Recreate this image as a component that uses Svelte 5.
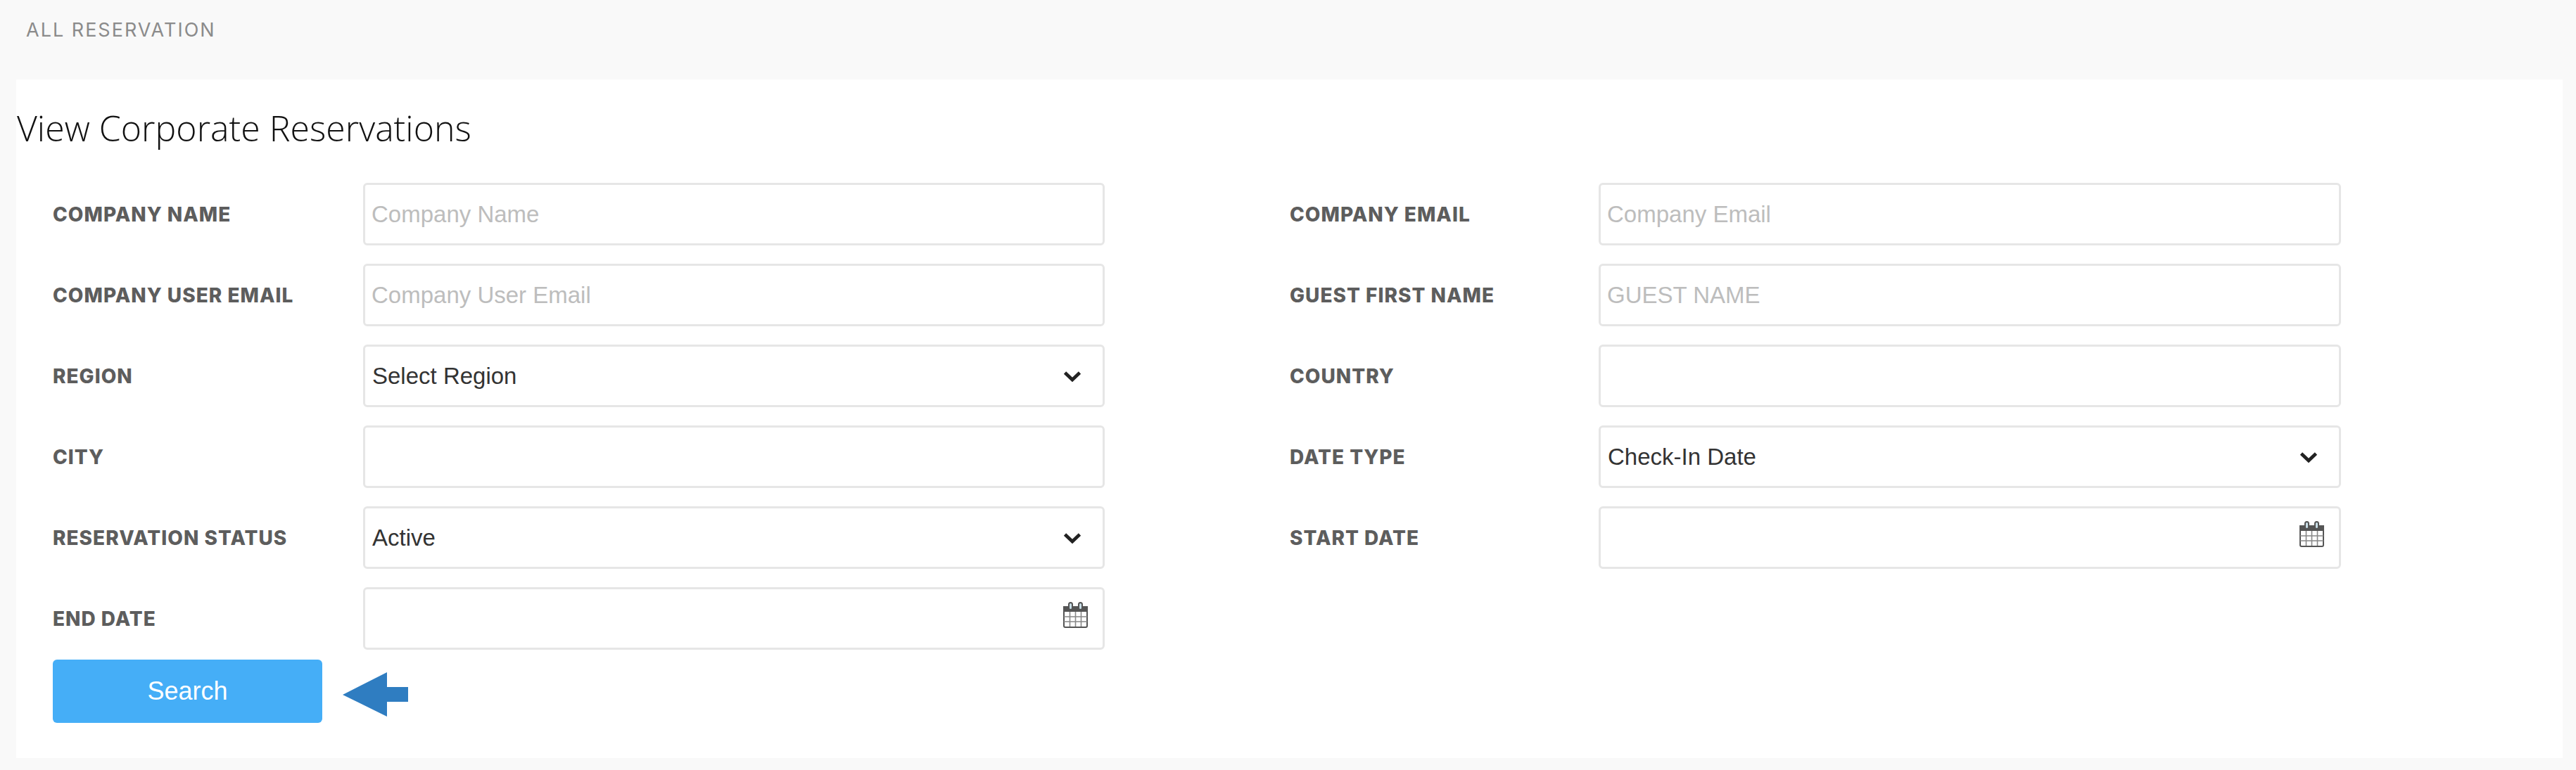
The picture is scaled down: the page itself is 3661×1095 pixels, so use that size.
<script>
  const fields = [
    { label: "COMPANY NAME", type: "text", placeholder: "Company Name" },
    { label: "COMPANY EMAIL", type: "text", placeholder: "Company Email" },
    { label: "COMPANY USER EMAIL", type: "text", placeholder: "Company User Email" },
    { label: "GUEST FIRST NAME", type: "text", placeholder: "GUEST NAME" },
    { label: "REGION", type: "select", value: "Select Region" },
    { label: "COUNTRY", type: "text", placeholder: "" },
    { label: "CITY", type: "text", placeholder: "" },
    { label: "DATE TYPE", type: "select", value: "Check-In Date" },
    { label: "RESERVATION STATUS", type: "select", value: "Active" },
    { label: "START DATE", type: "date" },
    { label: "END DATE", type: "date" },
  ];
</script>

<div class="page">
  <div class="crumb">ALL RESERVATION</div>
  <div class="card">
    <h1>View Corporate Reservations</h1>
    <div class="form">
      {#each fields as f}
        <div class="field">
          <span class="label">{f.label}</span>
          <div class="control">
            {#if f.type === "select"}
              <select><option>{f.value}</option></select>
              <svg class="chevron" viewBox="0 0 26 16" width="26" height="16">
                <path d="M2.5 3 13 13 23.5 3" fill="none" stroke="#222" stroke-width="4.8" />
              </svg>
            {:else}
              <input type="text" placeholder={f.placeholder} />
              {#if f.type === "date"}
                <svg class="calendar" viewBox="0 0 35 37" width="35" height="37">
                  <path d="M1 7h33v27a2 2 0 0 1-2 2H3a2 2 0 0 1-2-2z" fill="#fff" stroke="#555" stroke-width="2" />
                  <rect x="1" y="6" width="33" height="8" fill="#555" />
                  <rect x="8" y="1" width="5" height="10" rx="2.5" fill="#c8dde6" stroke="#555" stroke-width="2" />
                  <rect x="22" y="1" width="5" height="10" rx="2.5" fill="#c8dde6" stroke="#555" stroke-width="2" />
                  <path d="M9.5 14v21M17.5 14v21M25.5 14v21M1 21h33M1 28h33" stroke="#888" stroke-width="1.6" />
                </svg>
              {/if}
            {/if}
          </div>
        </div>
      {/each}
    </div>
    <div class="actions">
      <button>Search</button>
      <svg class="arrow" viewBox="0 0 93 63" width="93" height="63">
        <path d="M0 32 63 0v21h30v21H63v21z" fill="#2f7dc1" />
      </svg>
    </div>
  </div>
</div>

<style>
  :global(body) {
    margin: 0;
    background: #f9f9f9;
  }
  .page {
    width: 3661px;
    height: 1095px;
    box-sizing: border-box;
    padding: 0 19px 17px 23px;
    display: flex;
    flex-direction: column;
    font-family: "Liberation Sans", Arial, sans-serif;
  }
  .crumb {
    height: 113px;
    box-sizing: border-box;
    padding: 28px 0 0 14px;
    font-family: Inter, sans-serif;
    font-size: 27px;
    letter-spacing: 2px;
    line-height: 30px;
    color: #8b8b8b;
  }
  .card {
    flex: 1;
    background: #fff;
  }
  h1 {
    margin: 0;
    height: 147px;
    box-sizing: border-box;
    padding: 34px 0 0 1px;
    font-family: "Open Sans", sans-serif;
    font-weight: 300;
    font-size: 50px;
    line-height: 70px;
    color: #111;
  }
  .form {
    display: grid;
    grid-template-columns: 1758px 1494px;
    row-gap: 26px;
    padding-left: 52px;
  }
  .field {
    display: grid;
    grid-template-columns: 441px 1054px;
    align-items: center;
    height: 89px;
  }
  .field:nth-child(even) {
    grid-template-columns: 439px 1055px;
  }
  .label {
    font-family: Inter, sans-serif;
    font-weight: 800;
    font-size: 28px;
    letter-spacing: 1px;
    color: #5d5d5d;
  }
  .control {
    position: relative;
    height: 89px;
  }
  input,
  select {
    width: 100%;
    height: 100%;
    box-sizing: border-box;
    border: 3px solid #e6e6e6;
    border-radius: 6px;
    background: #fff;
    padding: 0 10px;
    font-family: "Liberation Sans", Arial, sans-serif;
    font-size: 33px;
    color: #333;
    appearance: none;
    outline: none;
  }
  input {
    padding-left: 9px;
  }
  input::placeholder {
    color: #bdbdbd;
    opacity: 1;
  }
  .chevron {
    position: absolute;
    right: 33px;
    top: 37px;
  }
  .calendar {
    position: absolute;
    right: 24px;
    top: 21px;
  }
  .actions {
    display: flex;
    align-items: center;
    gap: 29px;
    margin: 14px 0 0 52px;
  }
  button {
    width: 383px;
    height: 90px;
    border: none;
    border-radius: 6px;
    background: #45aef7;
    color: #fff;
    font-family: "Liberation Sans", Arial, sans-serif;
    font-size: 36px;
  }
  .arrow {
    margin-top: 8px;
  }
</style>
